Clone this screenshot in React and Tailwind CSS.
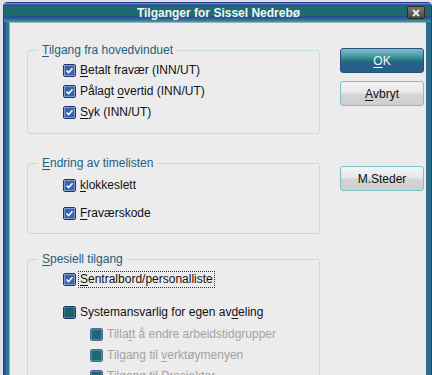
import React from "react";

function Check({ checked, disabled }) {
  return (
    <span
      className={
        "inline-flex items-center justify-center w-[13px] h-[13px] shrink-0 rounded-[2px] border " +
        (disabled ? "border-[#5866a0]" : "border-[#26306e]")
      }
    >
      <span
        className={
          "flex items-center justify-center w-[11px] h-[11px] rounded-[1px] border " +
          (checked
            ? "border-[#7c9ad0] bg-[#3a64a8]"
            : disabled
            ? "border-[#3e8a96] bg-[#1f6a72]"
            : "border-[#3a7c88] bg-[#1c6268]")
        }
      >
        {checked && (
          <svg width="9" height="9" viewBox="0 0 9 9">
            <path d="M1.5 4.5 L3.6 6.6 L7.5 2.2" fill="none" stroke="#ffffff" strokeWidth="1.5" />
          </svg>
        )}
      </span>
    </span>
  );
}

function U({ children }) {
  return <span className="underline underline-offset-2">{children}</span>;
}

function Row({ checked, disabled, children, h = "h-[21px]", indent = false, focus = false }) {
  return (
    <div className={"flex items-center gap-[3px] " + h + (indent ? " pl-[27px]" : "")}>
      <Check checked={checked} disabled={disabled} />
      <span
        className={
          "leading-[15px] px-[1px] " +
          (disabled ? "text-[#a3a3a3]" : "text-[#111111]") +
          (focus ? " outline outline-1 outline-dotted outline-[#333]" : "")
        }
      >
        {children}
      </span>
    </div>
  );
}

function Group({ title, children, className = "" }) {
  return (
    <fieldset className={"border border-[#c4dbe6] rounded-[3px] " + className}>
      <legend className="ml-[10px] px-[4px] leading-[15px] text-[#21607e]">{title}</legend>
      <div className="pl-[35px]">{children}</div>
    </fieldset>
  );
}

function Btn({ children, primary = false, className = "" }) {
  return (
    <button
      className={
        "w-[84px] h-[25px] rounded-[3px] border flex items-center justify-center leading-none " +
        (primary
          ? "border-[#2a4a88] bg-[linear-gradient(to_bottom,#7fc0c0_0%,#4a9aa8_30%,#1f6c78_55%,#2a5a98_75%,#1e6a70_100%)] text-[#f4f8f8] "
          : "border-[#7cc0cc] bg-[linear-gradient(to_bottom,#f4f4f4_0%,#e8e8e8_45%,#d4d4d4_55%,#cfcfcf_100%)] text-[#111] ") +
        className
      }
    >
      {children}
    </button>
  );
}

export default function App() {
  return (
    <div
      className="w-[432px] h-[375px] overflow-hidden bg-[#dfe3e8] pl-[3px] pt-[2px] text-[12px]"
      style={{ fontFamily: '"Liberation Sans", Arial, sans-serif' }}
    >
      <div className="w-[429px] h-[400px] flex flex-col rounded-t-[4px] border border-[#2a3a90] bg-[linear-gradient(to_right,#3040a8_0px,#2a7e8c_3px,#2c6e8a_100%)]">
        {/* title bar */}
        <div className="h-[19px] flex items-center pl-[4px] pr-[6px] bg-[linear-gradient(to_bottom,#6aa8b8_0px,#2c4aa0_2px,#1e6a70_4px,#1f6b6e_12px,#2c46a0_14px,#2a7c88_17px,#4e9aa8_19px)]">
          <div className="flex-1 text-center font-bold text-[12px] text-[#f2f6f6] leading-none pl-[22px]">
            Tilganger for Sissel Nedrebø
          </div>
          <div className="w-[18px] h-[13px] rounded-[2px] border border-[#2a2a30] bg-[linear-gradient(to_bottom,#7a766a,#4c4a44)] flex items-center justify-center">
            <svg width="10" height="8" viewBox="0 0 10 8">
              <path d="M2 1 L8 7 M8 1 L2 7" stroke="#e8eef0" strokeWidth="1.8" />
            </svg>
          </div>
        </div>
        {/* client */}
        <div className="flex-1 mx-[5px] ml-[5px] border-t border-l border-[#9ab0c0] bg-[#ececec] flex pl-[17px] pt-[20px]">
          <div className="w-[293px] flex flex-col">
            <Group title={<><U>T</U>ilgang fra hovedvinduet</>} className="pt-[2px] pb-[10px]">
              <Row checked><U>B</U>etalt fravær (INN/UT)</Row>
              <Row checked>Pålagt <U>o</U>vertid (INN/UT)</Row>
              <Row checked><U>S</U>yk (INN/UT)</Row>
            </Group>
            <Group title={<><U>E</U>ndring av timelisten</>} className="mt-[22px] pb-[6px]">
              <Row checked h="h-[28px]"><U>k</U>lokkeslett</Row>
              <Row checked h="h-[28px]"><U>F</U>raværskode</Row>
            </Group>
            <Group title={<><U>S</U>pesiell tilgang</>} className="mt-[18px] pt-[2px]">
              <Row checked focus><U>S</U>entralbord/personalliste</Row>
              <div className="h-[12px]" />
              <Row>Systemansvarlig for egen av<U>d</U>eling</Row>
              <div className="h-[1px]" />
              <Row disabled indent>Tilla<U>t</U>t å endre arbeidstidgrupper</Row>
              <Row disabled indent>Tilgang til <U>v</U>erktøymenyen</Row>
              <Row disabled indent>Tilgang til Prosjekter</Row>
            </Group>
          </div>
          <div className="ml-[20px] flex flex-col pt-[5px]">
            <Btn primary><U>O</U>K</Btn>
            <Btn className="mt-[8px]"><U>A</U>vbryt</Btn>
            <Btn className="mt-[60px]">M.Steder</Btn>
          </div>
        </div>
      </div>
    </div>
  );
}
